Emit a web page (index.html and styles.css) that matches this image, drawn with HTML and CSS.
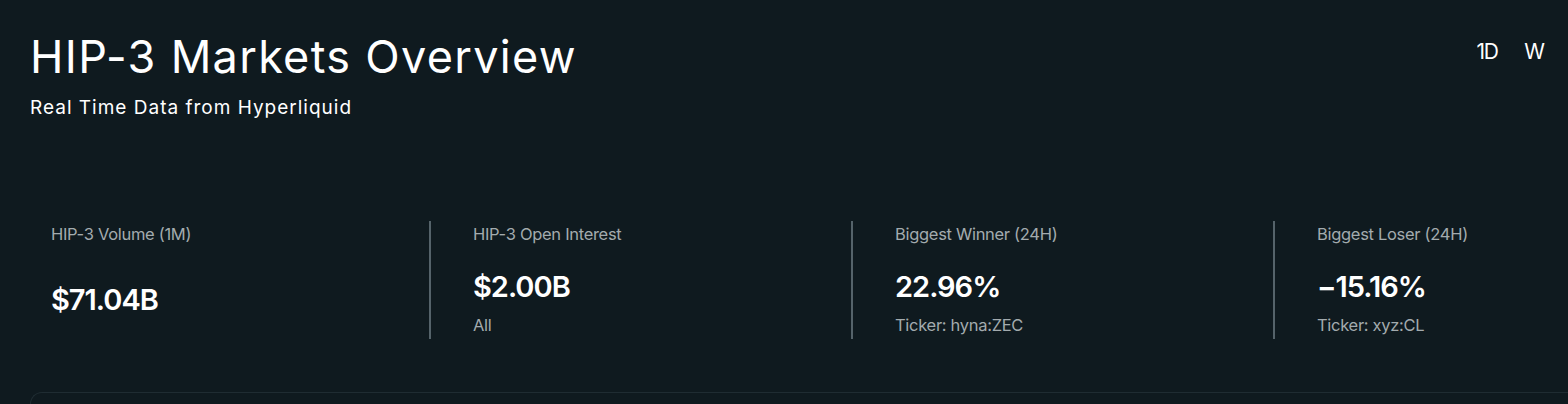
FILE: index.html
```html
<!DOCTYPE html>
<html lang="en">
<head>
<meta charset="utf-8">
<title>HIP-3 Markets Overview</title>
<link rel="stylesheet" href="styles.css">
</head>
<body>
<main class="page">
  <header class="header">
    <div class="heading">
      <h1 class="title">HIP-3 Markets Overview</h1>
      <p class="subtitle">Real Time Data from Hyperliquid</p>
    </div>
    <nav class="ranges">
      <button class="range range--tight">1D</button>
      <button class="range">W</button>
    </nav>
  </header>

  <section class="stats">
    <div class="stat stat--solo">
      <div class="stat-label">HIP-3 Volume (1M)</div>
      <div class="stat-value">$71.04B</div>
    </div>
    <div class="divider"></div>
    <div class="stat">
      <div class="stat-label">HIP-3 Open Interest</div>
      <div class="stat-value">$2.00B</div>
      <div class="stat-sub">All</div>
    </div>
    <div class="divider"></div>
    <div class="stat">
      <div class="stat-label">Biggest Winner (24H)</div>
      <div class="stat-value">22.96%</div>
      <div class="stat-sub">Ticker: hyna:ZEC</div>
    </div>
    <div class="divider"></div>
    <div class="stat">
      <div class="stat-label">Biggest Loser (24H)</div>
      <div class="stat-value">−15.16%</div>
      <div class="stat-sub">Ticker: xyz:CL</div>
    </div>
  </section>

  <section class="panel"></section>
</main>
</body>
</html>
```

FILE: styles.css
```css
* { box-sizing: border-box; }

html, body {
  margin: 0;
  padding: 0;
  background: #0f1a1f;
  color: #ffffff;
  font-family: Inter, "Noto Sans", sans-serif;
  overflow: hidden;
}

.page {
  padding: 30px 0 0 30px;
  height: 404px;
  overflow: hidden;
}

.header {
  display: flex;
  justify-content: space-between;
  align-items: flex-start;
  padding-right: 23px;
}

.title {
  margin: 0;
  font-size: 45px;
  font-weight: 400;
  line-height: 54px;
  letter-spacing: 1.3px;
}

.subtitle {
  margin: 12px 0 0;
  font-size: 19px;
  line-height: 24px;
  letter-spacing: 1px;
  font-weight: 400;
}

.ranges {
  display: flex;
  gap: 27px;
  padding-top: 10px;
}

.range {
  background: none;
  border: 0;
  padding: 0;
  color: #ffffff;
  font-family: inherit;
  font-size: 21px;
  letter-spacing: 0;
  line-height: 24px;
}

.range--tight {
  letter-spacing: -1.5px;
}

.stats {
  display: flex;
  margin-top: 101px;
  height: 118px;
}

.stat {
  width: 378px;
  flex: none;
  padding-left: 21px;
  padding-top: 3px;
}

.stat:last-child { flex: 1; }

.divider {
  width: 2px;
  flex: none;
  background: #55636a;
  margin: 0 21px;
}

.stat-label {
  font-size: 16.5px;
  line-height: 20px;
  color: #a3abae;
  letter-spacing: -0.3px;
}

.stat-value {
  margin-top: 26px;
  font-size: 29px;
  line-height: 34px;
  font-weight: 600;
  letter-spacing: -1px;
}

.stat--solo .stat-value { margin-top: 39px; }

.stat-sub {
  margin-top: 11px;
  font-size: 16.5px;
  line-height: 20px;
  color: #a3abae;
  letter-spacing: -0.3px;
}

.panel {
  margin-top: 53px;
  height: 12px;
  border: 1px solid #1f2c32;
  border-right: 0;
  border-bottom: 0;
  border-top-left-radius: 18px;
}
```
